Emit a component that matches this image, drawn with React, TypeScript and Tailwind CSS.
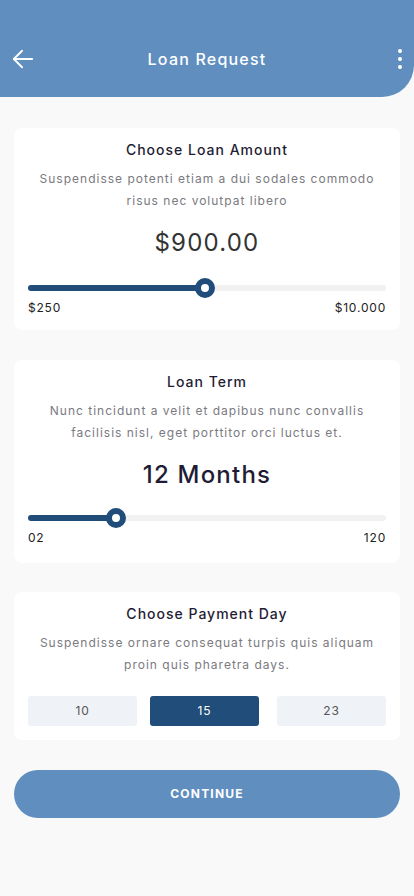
import React from "react";

function Slider({ pct, thumbX, mt }: { pct: number; thumbX: number; mt: string }) {
  return (
    <div className={`relative h-[20px] flex items-center ${mt}`}>
      <div className="h-[6px] w-full rounded-full bg-[#f1f1f1]" />
      <div
        className="absolute left-0 top-[7px] h-[6px] rounded-full bg-[#204d7a]"
        style={{ width: `${pct}px` }}
      />
      <div
        className="absolute top-0 h-[20px] w-[20px] rounded-full border-[6px] border-[#204d7a] bg-white"
        style={{ left: `${thumbX - 10}px` }}
      />
    </div>
  );
}

export default function App() {
  return (
    <div
      className="min-h-[896px] w-[414px] bg-[#f9f9f9] text-[#1f1d33]"
      style={{ fontFamily: "Inter, 'Noto Sans', sans-serif" }}
    >
      <header className="h-[97px] bg-[#5f8ebf] rounded-br-[32px] flex items-end pb-[26px] px-[12px] relative">
        <div className="flex w-full items-center justify-between h-[24px]">
          <div className="w-[24px] flex items-center">
            <svg width="22" height="22" viewBox="0 0 24 24" fill="none" stroke="white" strokeWidth="2" strokeLinecap="round" strokeLinejoin="round">
              <path d="M22 12H2" />
              <path d="M11 3l-9 9 9 9" />
            </svg>
          </div>
          <h1 className="text-white text-[16px] font-medium tracking-[1.2px]">Loan Request</h1>
          <div className="w-[24px] flex items-center justify-end">
            <svg width="10" height="22" viewBox="0 0 10 22" fill="white" className="mr-[-3px]">
              <circle cx="5" cy="3" r="2" />
              <circle cx="5" cy="11" r="2" />
              <circle cx="5" cy="19" r="2" />
            </svg>
          </div>
        </div>
      </header>

      <main className="px-[14px] pt-[31px] flex flex-col">
        <section className="bg-white rounded-[8px] px-[14px] pt-[13px] pb-[13px] text-center">
          <h2 className="text-[14px] font-medium tracking-[1px] leading-[18px]">Choose Loan Amount</h2>
          <p className="mt-[9px] text-[12px] leading-[22px] tracking-[1px] text-[#7a7a80]">
            Suspendisse potenti etiam a dui sodales commodo risus nec volutpat libero
          </p>
          <div className="mt-[16px] text-[24px] leading-[30px] tracking-[1.2px] text-[#333333]">$900.00</div>
          <Slider pct={180} thumbX={177} mt="mt-[20px]" />
          <div className="mt-[1px] flex justify-between text-[12px] tracking-[0.8px] text-[#222]">
            <span>$250</span>
            <span>$10.000</span>
          </div>
        </section>

        <section className="mt-[30px] bg-white rounded-[8px] px-[14px] pt-[13px] pb-[16px] text-center">
          <h2 className="text-[14px] font-medium tracking-[1px] leading-[18px]">Loan Term</h2>
          <p className="mt-[9px] text-[12px] leading-[22px] tracking-[1px] text-[#7a7a80]">
            Nunc tincidunt a velit et dapibus nunc convallis facilisis nisl, eget porttitor orci luctus et.
          </p>
          <div className="mt-[16px] text-[24px] leading-[30px] tracking-[1.2px] font-medium text-[#1f1d33]">12 Months</div>
          <Slider pct={88} thumbX={88} mt="mt-[18px]" />
          <div className="mt-[1px] flex justify-between text-[12px] tracking-[0.8px] text-[#222]">
            <span>02</span>
            <span>120</span>
          </div>
        </section>

        <section className="mt-[29px] bg-white rounded-[8px] px-[14px] pt-[13px] pb-[14px] text-center">
          <h2 className="text-[14px] font-medium tracking-[1px] leading-[18px]">Choose Payment Day</h2>
          <p className="mt-[9px] text-[12px] leading-[22px] tracking-[1px] text-[#7a7a80]">
            Suspendisse ornare consequat turpis quis aliquam proin quis pharetra days.
          </p>
          <div className="mt-[20px] flex">
            <div className="w-[109px] h-[30px] rounded-[3px] bg-[#eff2f6] flex items-center justify-center text-[12px] tracking-[0.8px] text-[#555]">10</div>
            <div className="ml-[13px] w-[109px] h-[30px] rounded-[3px] bg-[#204d7a] flex items-center justify-center text-[12px] tracking-[0.8px] text-white">15</div>
            <div className="ml-[18px] w-[109px] h-[30px] rounded-[3px] bg-[#eff2f6] flex items-center justify-center text-[12px] tracking-[0.8px] text-[#555]">23</div>
          </div>
        </section>

        <button className="mt-[30px] h-[48px] w-full rounded-full bg-[#5f8ebf] text-white text-[12px] font-bold tracking-[1.2px]">
          CONTINUE
        </button>
      </main>
    </div>
  );
}
